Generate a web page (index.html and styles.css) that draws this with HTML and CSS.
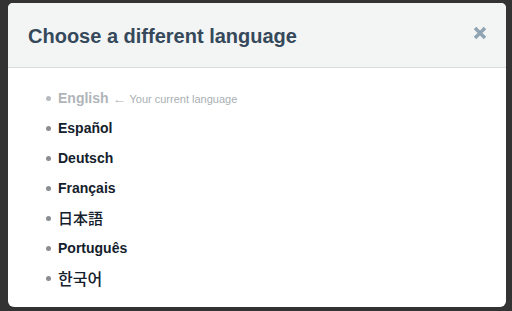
FILE: index.html
```html
<!DOCTYPE html>
<html>
<head>
<meta charset="utf-8">
<link rel="stylesheet" href="styles.css">
</head>
<body>
<div class="modal">
  <div class="modal-header">
    <h3 class="modal-title">Choose a different language</h3>
    <svg class="close" width="14" height="14" viewBox="0 0 14 14" aria-label="Close">
      <path d="M2 2 L12 12 M12 2 L2 12" stroke="#8fa3b3" stroke-width="3.4" stroke-linecap="butt" fill="none"/>
    </svg>
  </div>
  <div class="modal-body">
    <ul class="lang-list">
      <li class="current">English <span class="note"><span class="arrow">&larr;</span>Your current language</span></li>
      <li>Español</li>
      <li>Deutsch</li>
      <li>Français</li>
      <li class="cjk">日本語</li>
      <li>Português</li>
      <li class="cjk ko">한국어</li>
    </ul>
  </div>
</div>
</body>
</html>
```

FILE: styles.css
```css
html, body {
  margin: 0;
  padding: 0;
  background: #333333;
  width: 512px;
  height: 311px;
  overflow: hidden;
}
body {
  padding: 3px 6px 0 8px;
  box-sizing: border-box;
  font-family: "Liberation Sans", Arial, sans-serif;
}
.modal {
  width: 498px;
  height: 304px;
  background: #ffffff;
  border-radius: 5px 5px 6px 6px;
  overflow: hidden;
}
.modal-header {
  background: #f3f5f5;
  height: 64px;
  border-bottom: 1px solid #d8dde0;
  display: flex;
  align-items: center;
  justify-content: space-between;
  padding: 0 19px 0 20px;
}
.modal-title {
  margin: 0;
  font-size: 20px;
  font-weight: bold;
  color: #35495b;
  padding-top: 2px;
}
.close {
  display: block;
  margin-bottom: 5px;
}
.modal-body {
  padding: 15px 0 0 0;
}
.lang-list {
  list-style: none;
  margin: 0;
  padding: 0 0 0 50px;
}
.lang-list li {
  position: relative;
  height: 30px;
  line-height: 30px;
  font-size: 14px;
  font-weight: bold;
  color: #14202b;
}
.lang-list li::before {
  content: "";
  position: absolute;
  left: -12px;
  top: 13px;
  width: 5px;
  height: 5px;
  border-radius: 50%;
  background: #8a8e92;
}
.lang-list li.current {
  color: #b0b5b9;
}
.lang-list li.current::before {
  background: #b7bbbf;
}
.note {
  font-size: 11px;
  font-weight: normal;
  color: #aab0b5;
}
.arrow {
  display: inline-block;
  transform: scaleX(1.25);
  margin: 0 4px 0 2px;
}
.lang-list li.cjk {
  font-family: "Noto Sans CJK JP", sans-serif;
  font-weight: 500;
  font-size: 15px;
}
.lang-list li.ko {
  font-family: "Noto Sans CJK KR", sans-serif;
  font-size: 16px;
}
```
